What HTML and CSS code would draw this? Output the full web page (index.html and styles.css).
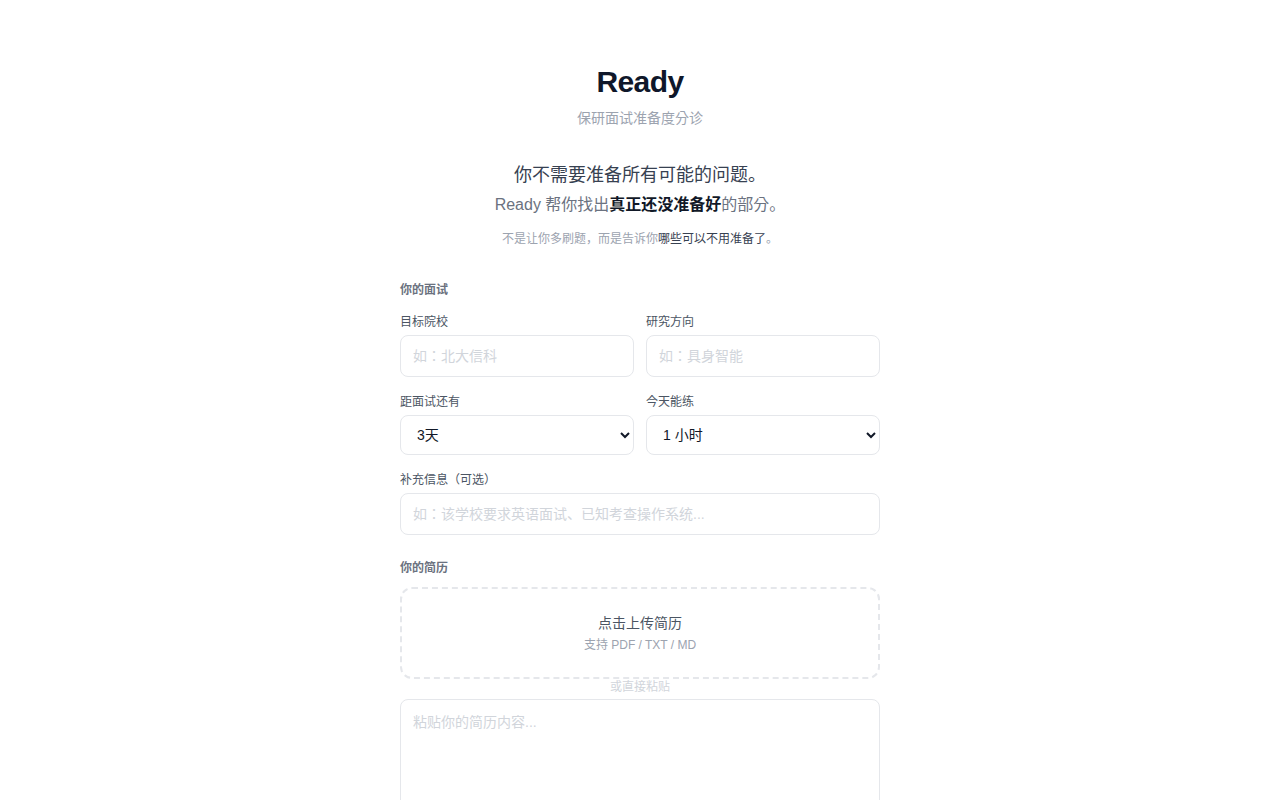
FILE: index.html
```html
<!DOCTYPE html>
<html lang="en">
<head>
<meta charset="utf-8">
<title>Ready</title>
<link rel="stylesheet" href="styles.css">
</head>
<body>
<main class="page">
  <header class="hero">
    <h1 class="title">Ready</h1>
    <p class="subtitle">保研面试准备度分诊</p>
  </header>

  <section class="pitch">
    <p class="pitch-main">你不需要准备所有可能的问题。</p>
    <p class="pitch-sub">Ready 帮你找出<strong>真正还没准备好</strong>的部分。</p>
    <p class="pitch-note">不是让你多刷题，而是告诉你<span class="dark">哪些可以不用准备了</span>。</p>
  </section>

  <section class="section">
    <h2 class="section-label">你的面试</h2>
    <div class="grid">
      <div class="field">
        <label class="label">目标院校</label>
        <input class="input" type="text" placeholder="如：北大信科">
      </div>
      <div class="field">
        <label class="label">研究方向</label>
        <input class="input" type="text" placeholder="如：具身智能">
      </div>
      <div class="field">
        <label class="label">距面试还有</label>
        <select class="select">
          <option>3天</option>
          <option>1周</option>
        </select>
      </div>
      <div class="field">
        <label class="label">今天能练</label>
        <select class="select">
          <option>1 小时</option>
          <option>2 小时</option>
        </select>
      </div>
      <div class="field full">
        <label class="label">补充信息（可选）</label>
        <input class="input" type="text" placeholder="如：该学校要求英语面试、已知考查操作系统...">
      </div>
    </div>
  </section>

  <section class="section resume">
    <h2 class="section-label">你的简历</h2>
    <div class="drop">
      <div class="drop-title">点击上传简历</div>
      <div class="drop-hint">支持 PDF / TXT / MD</div>
    </div>
    <div class="or">或直接粘贴</div>
    <textarea class="textarea" placeholder="粘贴你的简历内容..."></textarea>
  </section>
</main>
</body>
</html>
```

FILE: styles.css
```css
* { box-sizing: border-box; }
html, body { margin: 0; padding: 0; background: #ffffff; }
body {
  font-family: "Liberation Sans", Arial, "Noto Sans CJK KR", sans-serif;
  color: #111827;
}
.page {
  width: 480px;
  margin: 0 auto;
  padding-top: 64px;
}
.hero { text-align: center; }
.title {
  margin: 0;
  font-size: 30px;
  line-height: 36px;
  font-weight: 700;
  letter-spacing: -0.6px;
  color: #0f172a;
}
.subtitle {
  margin: 8px 0 0;
  font-size: 14px;
  line-height: 20px;
  color: #9ca3af;
}
.pitch {
  text-align: center;
  margin-top: 33px;
}
.pitch-main {
  margin: 0;
  font-size: 18px;
  line-height: 28px;
  color: #374151;
}
.pitch-sub {
  margin: 2px 0 0;
  font-size: 16px;
  line-height: 28px;
  color: #6b7280;
}
.pitch-sub strong { color: #111827; font-weight: 700; }
.pitch-note {
  margin: 11px 0 0;
  font-size: 12px;
  line-height: 18px;
  color: #9ca3af;
}
.pitch-note .dark { color: #374151; }

.section { margin-top: 34px; }
.section-label {
  margin: 0 0 16px;
  font-size: 12px;
  line-height: 16px;
  font-weight: 700;
  color: #6b7280;
}
.grid {
  display: grid;
  grid-template-columns: 1fr 1fr;
  column-gap: 12px;
  row-gap: 17px;
}
.full { grid-column: 1 / -1; }
.field { display: flex; flex-direction: column; }
.label {
  font-size: 12px;
  line-height: 16px;
  color: #4b5563;
  margin-bottom: 5px;
}
.input {
  height: 42px;
  border: 1px solid #e5e7eb;
  border-radius: 8px;
  padding: 0 12px;
  font-family: inherit;
  font-size: 14px;
  color: #111827;
  background: #fff;
  outline: none;
}
.input::placeholder, .textarea::placeholder { color: #d1d5db; }
.select {
  height: 40px;
  border: 1px solid #e5e7eb;
  border-radius: 8px;
  padding: 0 12px;
  font-family: inherit;
  font-size: 14px;
  color: #111827;
  background: #fff;
}
.resume { margin-top: 25px; }
.resume .section-label { margin-bottom: 11px; }
.drop {
  height: 92px;
  border: 2px dashed #e5e7eb;
  border-radius: 12px;
  display: flex;
  flex-direction: column;
  align-items: center;
  justify-content: center;
}
.drop-title {
  font-size: 14px;
  line-height: 20px;
  color: #4b5563;
}
.drop-hint {
  margin-top: 4px;
  font-size: 12px;
  line-height: 16px;
  color: #9ca3af;
}
.or {
  text-align: center;
  font-size: 12px;
  line-height: 16px;
  color: #d1d5db;
  margin: 0 0 4px;
}
.textarea {
  display: block;
  width: 100%;
  height: 200px;
  border: 1px solid #e5e7eb;
  border-radius: 8px;
  padding: 12px;
  font-family: inherit;
  font-size: 14px;
  line-height: 20px;
  resize: none;
  outline: none;
}
```
